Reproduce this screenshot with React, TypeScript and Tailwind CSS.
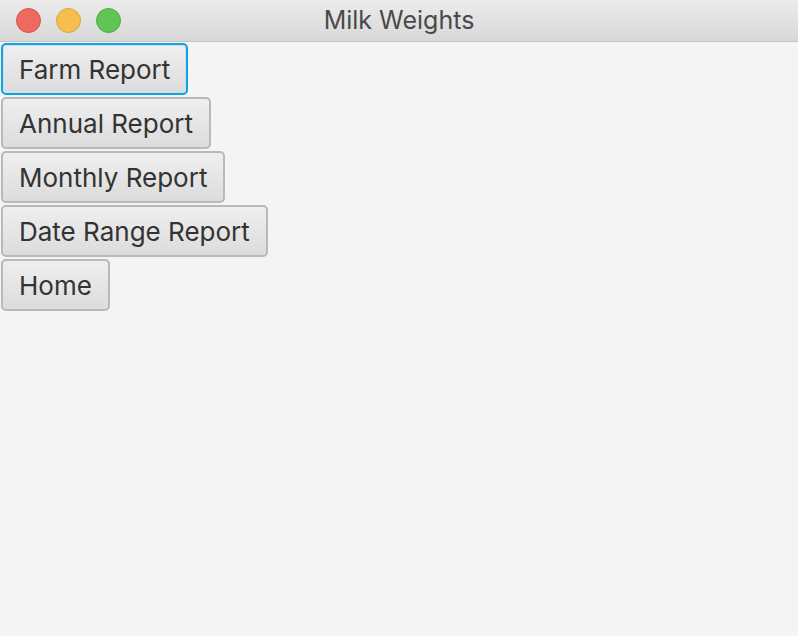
import React from "react"

const reports = ["Farm Report", "Annual Report", "Monthly Report", "Date Range Report", "Home"]

function TrafficLight({ color, border }: { color: string; border: string }) {
  return <span className={`block h-[25px] w-[25px] rounded-full border ${color} ${border}`} />
}

export default function App() {
  return (
    <div className="flex h-[636px] w-[798px] flex-col bg-[#f4f4f4] font-['Inter',sans-serif]">
      {/* Title bar */}
      <div className="relative flex h-[42px] shrink-0 items-center justify-center border-b border-[#c4c4c4] bg-gradient-to-b from-[#ececec] to-[#d8d8d8]">
        <div className="absolute left-[16px] top-[8px] flex gap-[15px]">
          <TrafficLight color="bg-[#ee6a5e]" border="border-[#d65347]" />
          <TrafficLight color="bg-[#f6be4f]" border="border-[#dea43a]" />
          <TrafficLight color="bg-[#61c454]" border="border-[#4fa944]" />
        </div>
        <span className="text-[25px] text-[#4a4a4a]">Milk Weights</span>
      </div>

      {/* Buttons */}
      <div className="flex flex-col items-start">
        {reports.map((label, i) => (
          <button
            key={label}
            className={`m-px flex h-[52px] items-center rounded-[5px] bg-gradient-to-b from-[#efefef] to-[#dcdcdc] px-[16px] text-[26px] text-[#333] ${
              i === 0
                ? "border-2 border-[#11a1dd] shadow-[inset_0_0_0_1px_#c8e4f0]"
                : "border-2 border-[#b9b9b9]"
            }`}
          >
            {label}
          </button>
        ))}
      </div>
    </div>
  )
}
